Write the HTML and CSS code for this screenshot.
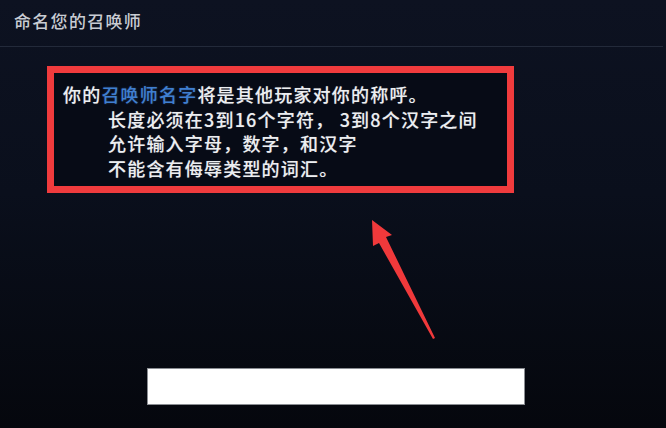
FILE: index.html
```html
<!DOCTYPE html>
<html lang="zh">
<head>
<meta charset="utf-8">
<title>命名您的召唤师</title>
<link rel="stylesheet" href="styles.css">
</head>
<body>
<div class="page">
  <header class="header"><h1 class="title">命名您的召唤师</h1></header>
  <section class="notice">
    <p class="line">你的<span class="hl">召唤师名字</span>将是其他玩家对你的称呼。</p>
    <p class="line indent">长度必须在3到16个字符，&nbsp;3到8个汉字之间</p>
    <p class="line indent">允许输入字母，数字，和汉字</p>
    <p class="line indent">不能含有侮辱类型的词汇。</p>
  </section>
  <div class="input-row"><input class="name-input" type="text" aria-label="召唤师名字"></div>
  <svg class="arrow" width="666" height="428" viewBox="0 0 666 428">
    <path d="M372 220 L392 235 L386 237 L435 338 L433 339 L379 243 L373 246 Z" fill="#f0393b"/>
  </svg>
</div>
</body>
</html>
```
FILE: styles.css
```css
html, body {
  margin: 0;
  padding: 0;
  height: 100%;
}
body {
  background: linear-gradient(180deg, #0d1221 0%, #0a0f1c 45%, #05070d 100%);
  font-family: "Noto Sans CJK SC", "Noto Sans", sans-serif;
  overflow: hidden;
}
.page {
  position: relative;
  width: 666px;
  height: 428px;
}
.header {
  height: 46px;
  margin-right: 3px;
  border-bottom: 1px solid #232a3a;
  display: flex;
  align-items: center;
  padding-left: 14px;
}
.title {
  margin: 0;
  font-size: 17px;
  font-weight: 500;
  color: #c9ccd3;
  letter-spacing: 1.3px;
  position: relative;
  top: -3px;
}
.notice {
  margin: 19px 0 0 47px;
  border: 7px solid #f03b3d;
  background: #070b16;
  padding: 9px 0 0 9px;
  box-sizing: content-box;
  width: 444px;
  height: 104px;
}
.line {
  margin: 0;
  font-size: 18px;
  font-weight: 500;
  letter-spacing: 1.2px;
  line-height: 24.5px;
  color: #eceef1;
  white-space: nowrap;
  text-shadow: 0 0 1px rgba(255,255,255,0.35);
}
.indent {
  padding-left: 45px;
}
.hl {
  color: #3f7fd0;
  text-shadow: 0 0 2px rgba(80,140,230,0.4);
}
.input-row {
  margin: 175px 0 0 147px;
}
.name-input {
  display: block;
  width: 378px;
  height: 37px;
  box-sizing: border-box;
  border: 1px solid #8a8d92;
  background: #ffffff;
  outline: none;
  padding: 0;
}
.arrow {
  position: absolute;
  left: 0;
  top: 0;
  pointer-events: none;
}
```
